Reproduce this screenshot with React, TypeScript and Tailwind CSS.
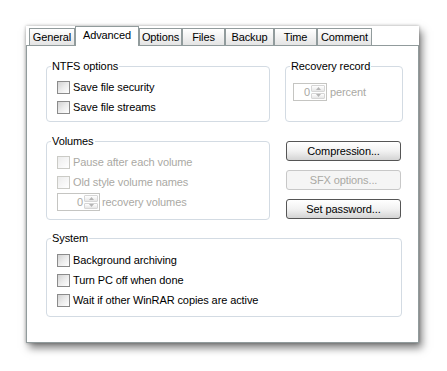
import React from 'react';

const tabs = [
  { name: 'General', w: 'w-[46px]' },
  { name: 'Advanced', w: 'w-[64px]', active: true },
  { name: 'Options', w: 'w-[43px]' },
  { name: 'Files', w: 'w-[43px]' },
  { name: 'Backup', w: 'w-[49px]' },
  { name: 'Time', w: 'w-[43px]' },
  { name: 'Comment', w: 'w-[55px]' },
];

const Check = ({ label, disabled }: { label: string; disabled?: boolean }) => (
  <div className="flex h-[20px] items-center">
    <span
      className={
        disabled
          ? 'w-[13px] h-[13px] border border-[#cbcbc6] bg-gradient-to-br from-[#ececec] to-white'
          : 'w-[13px] h-[13px] border border-[#8b8b8b] bg-gradient-to-br from-[#d2d2d2] via-[#ececec] to-white'
      }
    />
    <span className={disabled ? 'ml-[3px] text-[#aaa9a4]' : 'ml-[3px] text-black'}>{label}</span>
  </div>
);

// small disabled up/down control used beside the numeric fields
const Spinner = ({ w }: { w: string }) => (
  <div className={`${w} h-[18px] flex border border-[#c5c5c2] bg-white`}>
    <div className="flex-1 flex items-center justify-end pr-[1px] text-[#a9a9a4] leading-none">0</div>
    <div className="w-[15px] flex flex-col gap-px p-px pl-0">
      <div className="flex-1 rounded-[1px] border border-[#d6d6d6] bg-gradient-to-b from-white to-[#e6e6e6] flex items-center justify-center">
        <svg width="5" height="3" viewBox="0 0 5 3">
          <path d="M2.5 0L5 3H0z" fill="#b5b5b5" />
        </svg>
      </div>
      <div className="flex-1 rounded-[1px] border border-[#d6d6d6] bg-gradient-to-b from-white to-[#e6e6e6] flex items-center justify-center">
        <svg width="5" height="3" viewBox="0 0 5 3">
          <path d="M0 0H5L2.5 3z" fill="#b5b5b5" />
        </svg>
      </div>
    </div>
  </div>
);

const Group = ({
  title,
  className,
  inner,
  children,
}: {
  title: string;
  className: string;
  inner: string;
  children?: React.ReactNode;
}) => (
  <fieldset className={`border border-[#d3dbe3] rounded-[4px] ${className}`}>
    <legend className="ml-[4px] px-[1px] leading-[13px] text-black">{title}</legend>
    <div className={inner}>{children}</div>
  </fieldset>
);

const Button = ({ label, disabled }: { label: string; disabled?: boolean }) => (
  <div
    className={
      disabled
        ? 'h-[20px] rounded-[3px] border border-[#c8c8c8] bg-[#f5f5f5] flex items-center justify-center text-[#aaa9a4]'
        : 'h-[20px] rounded-[3px] border border-[#555555] bg-gradient-to-b from-white via-[#f2f2f2] to-[#d4d4d4] flex items-center justify-center text-black'
    }
  >
    {label}
  </div>
);

export default function App() {
  return (
    <div className="w-[447px] h-[371px] bg-white overflow-hidden pt-[26px] pl-[26px] font-['Liberation_Sans',Arial,sans-serif] text-[11px] leading-[13px] tracking-[-0.1px]">
      <div className="w-[393px] h-[317px] flex flex-col bg-white shadow-[3px_5px_8px_rgba(0,0,0,0.5),0_0_3px_rgba(0,0,0,0.3)]">
        {/* Tab strip */}
        <div className="h-[19px] flex items-end pl-[3px] relative z-10">
          {tabs.map(t =>
            t.active ? (
              <div
                key={t.name}
                className={`${t.w} h-[20px] -mb-px border border-b-0 border-[#919b9c] bg-white flex items-center justify-center pb-[3px] text-black`}
              >
                {t.name}
              </div>
            ) : (
              <div
                key={t.name}
                className={`${t.w} h-[17px] border border-b-0 border-[#919b9c] bg-gradient-to-b from-white to-[#e4e4e4] flex items-center justify-center text-black`}
              >
                {t.name}
              </div>
            )
          )}
        </div>

        {/* Tab page */}
        <div className="flex-1 border border-[#919b9c] bg-white pl-[19px] pt-[14px] flex flex-col">
          <div className="flex gap-[15px]">
            <Group title="NTFS options" className="w-[224px] h-[62px]" inner="pl-[10px] pt-[4px]">
              <Check label="Save file security" />
              <Check label="Save file streams" />
            </Group>
            <Group title="Recovery record" className="w-[118px] h-[62px]" inner="pl-[7px] pt-[10px]">
              <div className="flex items-center">
                <Spinner w="w-[34px]" />
                <span className="ml-[3px] text-[#aaa9a4]">percent</span>
              </div>
            </Group>
          </div>

          <div className="flex gap-[16px] mt-[13px]">
            <Group title="Volumes" className="w-[224px] h-[85px]" inner="pl-[10px] pt-[4px]">
              <Check label="Pause after each volume" disabled />
              <Check label="Old style volume names" disabled />
              <div className="flex items-center mt-px">
                <Spinner w="w-[43px]" />
                <span className="ml-[2px] text-[#aaa9a4]">recovery volumes</span>
              </div>
            </Group>
            <div className="w-[115px] pt-[6px] flex flex-col gap-[9px]">
              <Button label="Compression..." />
              <Button label="SFX options..." disabled />
              <Button label="Set password..." />
            </div>
          </div>

          <div className="mt-[12px]">
            <Group title="System" className="w-[356px] h-[85px]" inner="pl-[10px] pt-[5px]">
              <Check label="Background archiving" />
              <Check label="Turn PC off when done" />
              <Check label="Wait if other WinRAR copies are active" />
            </Group>
          </div>
        </div>
      </div>
    </div>
  );
}
